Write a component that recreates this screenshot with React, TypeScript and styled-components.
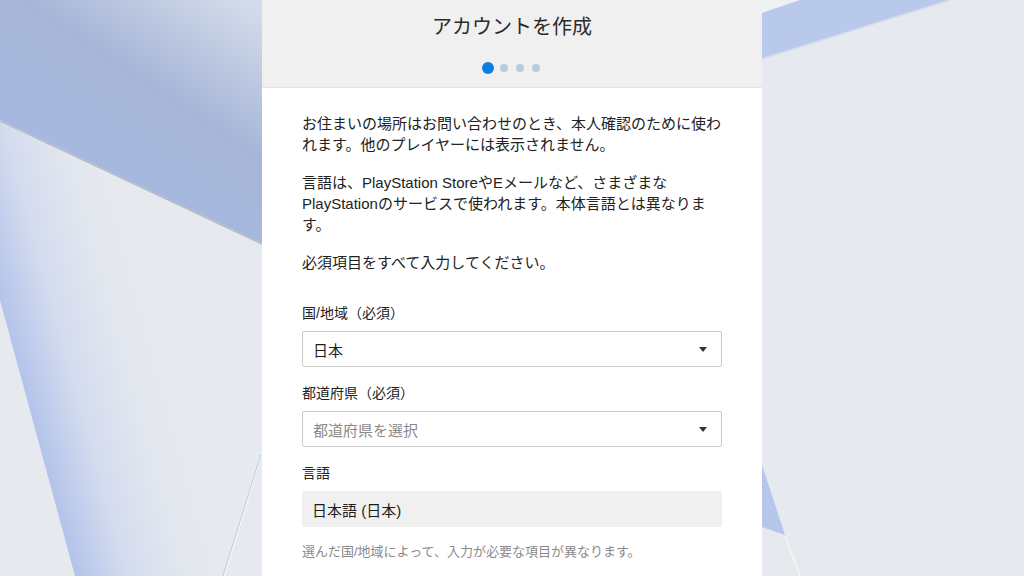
import React from 'react';
import styled, { createGlobalStyle } from 'styled-components';

const GlobalStyle = createGlobalStyle`
  html, body {
    margin: 0;
    padding: 0;
    height: 100%;
    overflow: hidden;
    background: #e7eaee;
    font-family: "Liberation Sans", "Noto Sans CJK JP", sans-serif;
  }
`;

const Backdrop = styled.svg`
  position: fixed;
  inset: 0;
  width: 100%;
  height: 100%;
  z-index: 0;
`;

const Page = styled.div`
  position: relative;
  z-index: 1;
  display: flex;
  justify-content: center;
  min-height: 100vh;
`;

const Panel = styled.main`
  width: 500px;
  background: #ffffff;
  display: flex;
  flex-direction: column;
`;

const Header = styled.header`
  background: #f0f0f0;
  border-bottom: 1px solid #e2e2e2;
  height: 88px;
  box-sizing: border-box;
  padding-top: 13px;
  display: flex;
  flex-direction: column;
  align-items: center;
`;

const Title = styled.h1`
  margin: 0;
  font-size: 20px;
  line-height: 28px;
  font-weight: 400;
  color: #2b2b2b;
`;

const Steps = styled.div`
  display: flex;
  align-items: center;
  margin-top: 21px;
  height: 12px;
`;

const Dot = styled.span<{ $active?: boolean }>`
  display: block;
  border-radius: 50%;
  width: ${p => (p.$active ? 12 : 8)}px;
  height: ${p => (p.$active ? 12 : 8)}px;
  margin: 0 ${p => (p.$active ? 2 : 4)}px;
  background: ${p => (p.$active ? '#0a7fe3' : '#b6cde1')};
`;

const Body = styled.section`
  padding: 25px 40px 0;
  display: flex;
  flex-direction: column;
`;

const Paragraph = styled.p`
  margin: 0 0 17px;
  font-size: 15px;
  line-height: 21px;
  color: #222;
  &:last-of-type {
    margin-bottom: 0;
  }
`;

const Intro = styled.div`
  display: flex;
  flex-direction: column;
  margin-bottom: 30px;
`;

const Field = styled.div`
  display: flex;
  flex-direction: column;
  margin-bottom: 16px;
`;

const Label = styled.label`
  font-size: 14px;
  line-height: 20px;
  color: #222;
  margin-bottom: 8px;
`;

const Select = styled.div<{ $placeholder?: boolean }>`
  height: 36px;
  box-sizing: border-box;
  border: 1px solid #c9c9c9;
  border-radius: 2px;
  padding: 0 14px 0 10px;
  display: flex;
  align-items: center;
  justify-content: space-between;
  font-size: 15px;
  color: ${p => (p.$placeholder ? '#8a8a8a' : '#1e1e1e')};
`;

const Arrow = styled.span`
  width: 0;
  height: 0;
  border-left: 4px solid transparent;
  border-right: 4px solid transparent;
  border-top: 5px solid #333;
`;

const ReadOnly = styled.div`
  height: 36px;
  box-sizing: border-box;
  background: #f0f0f0;
  border-radius: 2px;
  padding: 0 10px;
  display: flex;
  align-items: center;
  font-size: 15px;
  color: #1e1e1e;
`;

const Note = styled.p`
  margin: 0;
  font-size: 13px;
  line-height: 18px;
  color: #8a8a8a;
`;

const Background = () => (
  <Backdrop viewBox="0 0 1024 576" preserveAspectRatio="none">
    <defs>
      <linearGradient id="topBlue" gradientUnits="userSpaceOnUse" x1="240" y1="0" x2="120" y2="180">
        <stop offset="0" stopColor="#d3dbea" />
        <stop offset="0.55" stopColor="#a7b6d8" />
        <stop offset="1" stopColor="#a6b8df" />
      </linearGradient>
      <linearGradient id="wedge" gradientUnits="userSpaceOnUse" x1="37" y1="438" x2="175" y2="400">
        <stop offset="0" stopColor="#b3c3ea" />
        <stop offset="0.35" stopColor="#d3dbee" />
        <stop offset="0.75" stopColor="#e3e7ef" />
        <stop offset="1" stopColor="#e6e9ee" />
      </linearGradient>
    </defs>
    <rect width="1024" height="576" fill="#e6e9ee" />
    <polygon points="0,300 75,576 262,576 262,245 0,122" fill="url(#wedge)" />
    <polygon points="0,0 262,0 262,243 0,120" fill="url(#topBlue)" />
    <line x1="0" y1="121" x2="262" y2="244" stroke="#b2b8c4" strokeWidth="1.5" />
    <line x1="262" y1="452" x2="224" y2="576" stroke="#f4f6fa" strokeWidth="2" />
    <line x1="261" y1="454" x2="223" y2="576" stroke="#b9c8ea" strokeWidth="1" />
    <polygon points="762,0 800,0 762,13" fill="#eef0f3" />
    <polygon points="762,13 800,0 950,0 762,58" fill="#b8c9ec" />
    <line x1="762" y1="59" x2="950" y2="0" stroke="#d6dcea" strokeWidth="1.5" />
    <polygon points="762,465 785,535 762,527" fill="#b6c7ec" />
    <line x1="785" y1="536" x2="800" y2="576" stroke="#f2f4f7" strokeWidth="2" />
  </Backdrop>
);

const App = () => (
  <>
    <GlobalStyle />
    <Background />
    <Page>
      <Panel>
        <Header>
          <Title>アカウントを作成</Title>
          <Steps>
            <Dot $active />
            <Dot />
            <Dot />
            <Dot />
          </Steps>
        </Header>
        <Body>
          <Intro>
            <Paragraph>
              お住まいの場所はお問い合わせのとき、本人確認のために使われます。他のプレイヤーには表示されません。
            </Paragraph>
            <Paragraph>
              言語は、PlayStation StoreやEメールなど、さまざまなPlayStationのサービスで使われます。本体言語とは異なります。
            </Paragraph>
            <Paragraph>必須項目をすべて入力してください。</Paragraph>
          </Intro>
          <Field>
            <Label>国/地域（必須）</Label>
            <Select>
              日本
              <Arrow />
            </Select>
          </Field>
          <Field>
            <Label>都道府県（必須）</Label>
            <Select $placeholder>
              都道府県を選択
              <Arrow />
            </Select>
          </Field>
          <Field>
            <Label>言語</Label>
            <ReadOnly>日本語 (日本)</ReadOnly>
          </Field>
          <Note>選んだ国/地域によって、入力が必要な項目が異なります。</Note>
        </Body>
      </Panel>
    </Page>
  </>
);

export default App;
